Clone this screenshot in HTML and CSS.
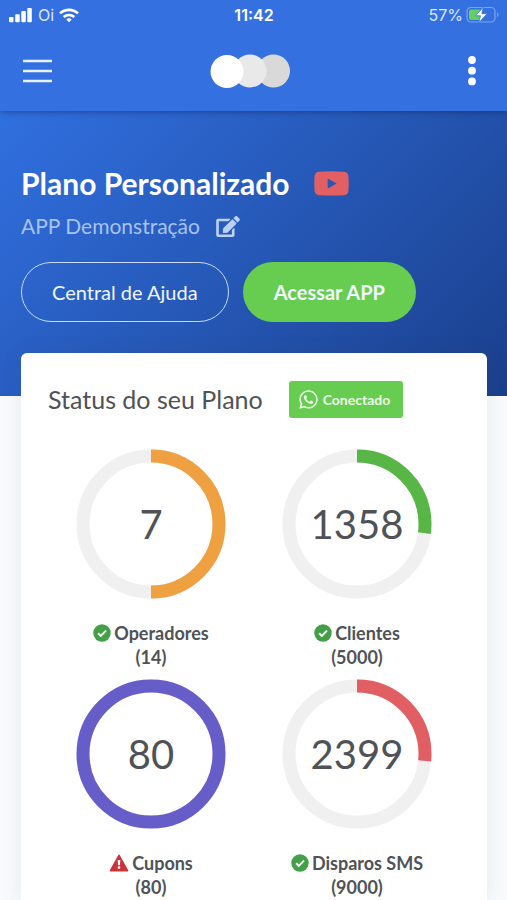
FILE: index.html
```html
<!DOCTYPE html>
<html lang="pt-BR">
<head>
<meta charset="utf-8">
<meta name="viewport" content="width=device-width, initial-scale=1">
<title>Plano Personalizado</title>
<link rel="stylesheet" href="styles.css">
</head>
<body>
<svg class="sprite" aria-hidden="true">
  <symbol id="check" viewBox="0 0 512 512">
    <circle cx="256" cy="256" r="248" fill="#43a047"/>
    <path d="M146 262l76 76 148-152" fill="none" stroke="#fff" stroke-width="54"/>
  </symbol>
  <symbol id="warning" viewBox="0 0 19 18">
    <path d="M9.500 1.300L18 16.700H1z" fill="#cb333b" stroke="#cb333b" stroke-width="1.600" stroke-linejoin="round"/>
    <path d="M8.200 6h2.600l-.4 5.300H8.600z" fill="#fff"/>
    <circle cx="9.500" cy="13.600" r="1.300" fill="#fff"/>
  </symbol>
</svg>

<div class="topbar">
  <div class="status">
    <div class="status-left">
      <svg width="24" height="16" viewBox="0 0 24 16" fill="#fff" aria-hidden="true">
        <rect x="0" y="10" width="4.500" height="5.300" rx="1"/>
        <rect x="6.200" y="7.300" width="4.500" height="8" rx="1"/>
        <rect x="12.300" y="4" width="4.500" height="11.300" rx="1"/>
        <rect x="18.300" y="1" width="4.500" height="14.300" rx="1"/>
      </svg>
      <span>Oi</span>
      <svg width="20" height="16" viewBox="0 0 20 16" fill="none" stroke="#fff" stroke-width="2.700" aria-hidden="true">
        <path d="M1 6.400a13 13 0 0 1 18 0"/>
        <path d="M4.700 10.100a7.700 7.700 0 0 1 10.600 0"/>
        <path d="M10 15.300l-2.700-2.800a4 4 0 0 1 5.400 0z" fill="#fff" stroke="none"/>
      </svg>
    </div>
    <time class="clock">11:42</time>
    <div class="status-right">
      <span>57%</span>
      <svg width="33" height="18" viewBox="0 0 33 18" aria-hidden="true">
        <rect x="1" y="1.500" width="28" height="14.500" rx="4" fill="none" stroke="#7da3ec" stroke-width="1.200"/>
        <path d="M31 6.500c2 .8 2 3.700 0 4.500z" fill="#7da3ec"/>
        <rect x="3" y="3.500" width="13" height="10.500" rx="2" fill="#65cf62"/>
        <path d="M17.500 1L9.500 9.800h5L12.500 17l8.700-9.300h-5.400z" fill="#fff" stroke="#3570e0" stroke-width=".8"/>
      </svg>
    </div>
  </div>
  <header class="nav">
    <button class="icon-button" type="button" aria-label="Menu">
      <svg width="30" height="26" viewBox="0 0 30 26" stroke="#e9f1ff" stroke-width="2.400" aria-hidden="true">
        <path d="M0 3h29M0 13h29M0 23h29"/>
      </svg>
    </button>
    <svg width="80" height="34" viewBox="0 0 80 34" role="img" aria-label="Logo">
      <circle cx="63.500" cy="17" r="16.500" fill="#dad9da"/>
      <circle cx="40" cy="17" r="16.500" fill="#e9e9e9"/>
      <circle cx="17" cy="17.500" r="16.500" fill="#fff"/>
    </svg>
    <button class="icon-button icon-button-end" type="button" aria-label="Mais opções">
      <svg width="10" height="32" viewBox="0 0 10 32" fill="#fff" aria-hidden="true">
        <circle cx="5" cy="5" r="3.900"/><circle cx="5" cy="15.700" r="3.900"/><circle cx="5" cy="26.400" r="3.900"/>
      </svg>
    </button>
  </header>
</div>

<section class="hero">
  <div class="title-row">
    <h1>Plano Personalizado</h1>
    <a href="#video" aria-label="Vídeo">
      <svg width="35" height="25" viewBox="0 0 35 25" aria-hidden="true">
        <path fill="#e26064" fill-rule="evenodd" d="M5 .8Q17.500-.2 30 .8Q34 1 34.400 5Q35 12.500 34.400 20Q34 24 30 24.200Q17.500 25 5 24.200Q1 24 .6 20Q0 12.500 .6 5Q1 1 5 .8zM13.700 7.600v9.800l9-4.900z"/>
      </svg>
    </a>
  </div>
  <div class="subtitle-row">
    <p>APP Demonstração</p>
    <button class="icon-button" type="button" aria-label="Editar">
      <svg width="24" height="21" viewBox="0 0 576 512" fill="#bdd0f2" aria-hidden="true">
        <path d="M402.600 83.200l90.200 90.200c3.800 3.800 3.800 10 0 13.800L274.400 405.600l-92.800 10.300c-12.400 1.400-22.900-9.100-21.500-21.500l10.300-92.800L388.800 83.200c3.800-3.800 10-3.800 13.800 0zm162-22.900l-48.800-48.800c-15.200-15.200-39.900-15.200-55.200 0l-35.400 35.400c-3.800 3.800-3.800 10 0 13.800l90.200 90.200c3.800 3.800 10 3.800 13.800 0l35.400-35.400c15.200-15.300 15.200-40 0-55.200zM384 346.200V448H64V128h229.800c3.200 0 6.200-1.300 8.500-3.500l40-40c7.600-7.600 2.200-20.500-8.500-20.500H48C21.500 64 0 85.500 0 112v352c0 26.500 21.500 48 48 48h352c26.500 0 48-21.500 48-48V306.200c0-10.700-12.900-16-20.500-8.500l-40 40c-2.200 2.300-3.500 5.300-3.500 8.500z"/>
      </svg>
    </button>
  </div>
  <div class="actions">
    <a class="pill pill-outline" href="#ajuda">Central de Ajuda</a>
    <a class="pill pill-green" href="#app">Acessar APP</a>
  </div>
</section>

<main class="card">
  <div class="card-head">
    <h2>Status do seu Plano</h2>
    <button class="connected" type="button">
      <svg width="19" height="21" viewBox="0 0 448 512" fill="#effbea" aria-hidden="true">
        <path d="M380.900 97.100C339 55.100 283.200 32 223.900 32c-122.400 0-222 99.600-222 222 0 39.100 10.200 77.300 29.600 111L0 480l117.700-30.900c32.400 17.700 68.900 27 106.100 27h.1c122.300 0 224.100-99.600 224.100-222 0-59.300-25.200-115-67.100-157zm-157 341.600c-33.200 0-65.700-8.900-94-25.700l-6.700-4-69.800 18.300L72 359.200l-4.400-7c-18.500-29.400-28.200-63.300-28.200-98.200 0-101.700 82.800-184.500 184.600-184.500 49.300 0 95.600 19.200 130.400 54.100 34.800 34.900 56.200 81.200 56.100 130.500 0 101.800-84.900 184.600-186.600 184.600zm101.200-138.200c-5.500-2.800-32.800-16.200-37.900-18-5.100-1.900-8.800-2.800-12.500 2.800-3.700 5.600-14.300 18-17.600 21.800-3.200 3.700-6.500 4.200-12 1.400-32.600-16.300-54-29.100-75.500-66-5.700-9.800 5.700-9.100 16.300-30.300 1.800-3.700.9-6.900-.5-9.700-1.400-2.800-12.500-30.100-17.100-41.200-4.500-10.800-9.100-9.300-12.500-9.500-3.200-.2-6.900-.2-10.600-.2-3.700 0-9.700 1.400-14.800 6.900-5.100 5.600-19.400 19-19.400 46.300 0 27.300 19.900 53.700 22.600 57.400 2.800 3.700 39.100 59.700 94.800 83.800 35.200 15.200 49 16.500 66.600 13.900 10.700-1.600 32.800-13.400 37.400-26.400 4.600-13 4.600-24.100 3.200-26.400-1.300-2.500-5-3.900-10.500-6.600z"/>
      </svg>
      Conectado
    </button>
  </div>

  <div class="meters">
    <div class="meter">
      <div class="ring">
        <svg viewBox="0 0 150 150" aria-hidden="true">
          <circle class="track" cx="75" cy="75" r="68"/>
          <circle class="value orange" cx="75" cy="75" r="68" pathLength="100" stroke-dasharray="50 100"/>
        </svg>
        <span>7</span>
      </div>
      <p class="label"><svg width="18" height="18" aria-hidden="true"><use href="#check"/></svg>Operadores</p>
      <p class="limit">(14)</p>
    </div>
    <div class="meter">
      <div class="ring">
        <svg viewBox="0 0 150 150" aria-hidden="true">
          <circle class="track" cx="75" cy="75" r="68"/>
          <circle class="value green" cx="75" cy="75" r="68" pathLength="100" stroke-dasharray="27.160 100"/>
        </svg>
        <span>1358</span>
      </div>
      <p class="label"><svg width="18" height="18" aria-hidden="true"><use href="#check"/></svg>Clientes</p>
      <p class="limit">(5000)</p>
    </div>
    <div class="meter">
      <div class="ring">
        <svg viewBox="0 0 150 150" aria-hidden="true">
          <circle class="track" cx="75" cy="75" r="68"/>
          <circle class="value purple" cx="75" cy="75" r="68"/>
        </svg>
        <span>80</span>
      </div>
      <p class="label"><svg width="20" height="18" aria-hidden="true"><use href="#warning"/></svg>Cupons</p>
      <p class="limit">(80)</p>
    </div>
    <div class="meter">
      <div class="ring">
        <svg viewBox="0 0 150 150" aria-hidden="true">
          <circle class="track" cx="75" cy="75" r="68"/>
          <circle class="value red" cx="75" cy="75" r="68" pathLength="100" stroke-dasharray="26.650 100"/>
        </svg>
        <span>2399</span>
      </div>
      <p class="label"><svg width="18" height="18" aria-hidden="true"><use href="#check"/></svg>Disparos SMS</p>
      <p class="limit">(9000)</p>
    </div>
  </div>
</main>
</body>
</html>
```
FILE: styles.css
```css
* {
  box-sizing: border-box;
}

body {
  margin: 0;
  min-height: 100vh;
  display: flex;
  flex-direction: column;
  background: #f9fafc;
  color: #4f5256;
  font-family: Lato, sans-serif;
}

h1,
h2,
p {
  margin: 0;
}

svg {
  display: block;
  flex: none;
}

a {
  color: inherit;
  text-decoration: none;
}

button {
  font: inherit;
  color: inherit;
  border: 0;
  cursor: pointer;
}

.sprite {
  display: none;
}

.topbar {
  position: relative;
  background: #3470e0;
  box-shadow: 0 1px 6px rgba(10, 35, 90, 0.5);
}

.status {
  display: grid;
  grid-template-columns: 1fr auto 1fr;
  align-items: center;
  height: 30px;
  padding: 0 8px 0 9px;
  color: #dbe7fc;
  font: 16px/20px Inter, sans-serif;
}

.status-left,
.status-right {
  display: flex;
  align-items: center;
  gap: 5px;
}

.status-right {
  justify-content: flex-end;
  gap: 3px;
}

.clock {
  color: #fff;
  font-weight: 600;
}

.nav {
  display: grid;
  grid-template-columns: 1fr auto 1fr;
  align-items: center;
  height: 81px;
  padding: 0 30px 0 23px;
}

.icon-button {
  justify-self: start;
  padding: 0;
  background: none;
}

.icon-button-end {
  justify-self: end;
}

.hero {
  padding: 52px 21px 74px;
  background: linear-gradient(135deg, #3170e0 0%, #1a3f8c 100%);
}

.title-row,
.subtitle-row,
.actions {
  display: flex;
  align-items: center;
}

.title-row {
  gap: 24px;
}

h1 {
  color: #fff;
  font-size: 30px;
  line-height: 40px;
  font-weight: 700;
}

.subtitle-row {
  gap: 16px;
  margin-top: 8px;
  color: #a8c2f3;
  font-size: 21px;
  line-height: 30px;
}

.actions {
  gap: 14px;
  margin-top: 21px;
}

.pill {
  padding: 14px 30px;
  border: 1px solid transparent;
  border-radius: 30px;
  font-size: 20px;
  line-height: 30px;
  color: #f0f6ff;
}

.pill-outline {
  border-color: #c9dafa;
}

.pill-green {
  background: #66cd50;
  font-weight: 700;
}

.card {
  flex: 1;
  margin: -43px 20px 0 21px;
  padding: 28px 27px 0;
  border-radius: 6px 6px 0 0;
  background: #fff;
  box-shadow: 0 0 20px rgba(60, 70, 90, 0.1);
}

.card-head {
  display: flex;
  align-items: center;
  gap: 26px;
}

h2 {
  font-size: 25px;
  line-height: 37px;
  font-weight: 400;
}

.connected {
  display: flex;
  align-items: center;
  gap: 5px;
  height: 37px;
  padding: 0 13px 0 10px;
  border-radius: 3px;
  background: #66cd50;
  color: #effbea;
  font-size: 14px;
  font-weight: 700;
}

.meters {
  display: grid;
  grid-template-columns: 1fr 1fr;
  row-gap: 10px;
  margin-top: 31px;
}

.meter {
  display: flex;
  flex-direction: column;
  align-items: center;
}

.ring {
  display: grid;
  place-items: center;
  margin-bottom: 22px;
  font-size: 40px;
  line-height: 48px;
}

.ring > * {
  grid-area: 1 / 1;
}

.ring svg {
  width: 150px;
  height: 150px;
}

.ring circle {
  fill: none;
  stroke-width: 13;
}

.track {
  stroke: #f0f0f0;
}

.value {
  transform: rotate(-90deg);
  transform-origin: center;
}

.orange {
  stroke: #efa142;
}

.green {
  stroke: #58b647;
}

.purple {
  stroke: #665dc8;
}

.red {
  stroke: #e15f62;
}

.label,
.limit {
  font-size: 18px;
  line-height: 24px;
  font-weight: 700;
}

.label {
  display: flex;
  align-items: center;
  gap: 3px;
}
```
